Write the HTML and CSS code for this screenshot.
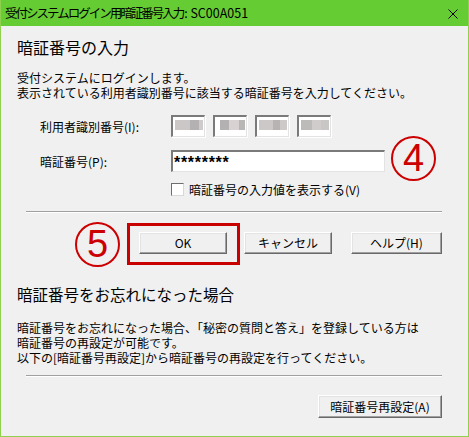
FILE: index.html
```html
<!DOCTYPE html>
<html lang="ja">
<head>
    <meta charset="UTF-8">
    <title>暗証番号入力</title>
    <link rel="stylesheet" href="styles.css">
</head>
<body>
    <div class="window">
        <div class="titlebar">
            <span class="title"><span class="title-jp">受付システムログイン用暗証番号入力</span>: SC00A051</span>
            <svg class="close" width="12" height="12" viewBox="0 0 12 12">
                <path d="M1.5 1.5 L10.5 10.5 M10.5 1.5 L1.5 10.5" stroke="#000" stroke-width="1"/>
            </svg>
        </div>

        <div class="content">
            <h1 class="heading first">暗証番号の入力</h1>
            <p class="text intro">受付システムにログインします。<br>表示されている利用者識別番号に該当する暗証番号を入力してください。</p>

            <div class="row row-id">
                <label class="label">利用者識別番号(I):</label>
                <div class="id-boxes">
                    <div class="id-box"><div class="mask mask-a"></div></div>
                    <div class="id-box"><div class="mask mask-b"></div></div>
                    <div class="id-box"><div class="mask mask-c"></div></div>
                    <div class="id-box"><div class="mask mask-d"></div></div>
                </div>
            </div>

            <div class="row row-pass">
                <label class="label">暗証番号(P):</label>
                <div class="field">********</div>
            </div>

            <div class="row row-check">
                <span class="checkbox"></span>
                <span class="check-label">暗証番号の入力値を表示する(V)</span>
            </div>

            <div class="sep sep-top"></div>

            <div class="buttons">
                <button class="btn btn-ok">OK</button>
                <button class="btn btn-cancel">キャンセル</button>
                <button class="btn btn-help">ヘルプ(H)</button>
            </div>

            <h2 class="heading second">暗証番号をお忘れになった場合</h2>
            <p class="text forgot">暗証番号をお忘れになった場合、「秘密の質問と答え」を登録している方は<br>暗証番号の再設定が可能です。<br>以下の[暗証番号再設定]から暗証番号の再設定を行ってください。</p>

            <div class="sep sep-bottom"></div>

            <div class="buttons reset-row">
                <button class="btn btn-reset">暗証番号再設定(A)</button>
            </div>

            <!-- annotation overlays -->
            <div class="step step-4">4</div>
            <div class="step step-5">5</div>
            <div class="highlight"></div>
        </div>
    </div>
</body>
</html>
```

FILE: styles.css
```css
* {
    box-sizing: border-box;
}

body {
    margin: 0;
    background: #f0f0f0;
    font-family: "Noto Sans CJK JP", "Noto Sans", sans-serif;
    font-size: 12px;
    color: #000;
}

.window {
    width: 469px;
    height: 437px;
    border: 1px solid #8fd14f;
    border-top: none;
    background: #f0f0f0;
    overflow: hidden;
}

.titlebar {
    height: 26px;
    margin: 0 -1px;
    background: #66cc33;
    display: flex;
    align-items: center;
    justify-content: space-between;
    padding: 0 10px 0 5px;
}

.title {
    font-size: 12.5px;
    line-height: 16px;
    margin-top: -1px;
}

.title-jp {
    letter-spacing: -2px;
    margin-right: 1px;
}

.close {
    display: block;
    margin-top: 2px;
}

.content {
    position: relative;
    padding: 0 26px 0 16px;
}

.heading {
    margin: 0;
    font-weight: normal;
    font-size: 16px;
    line-height: 20px;
}

.heading.first {
    padding-top: 11px;
}

.heading.second {
    margin-top: 30px;
    font-size: 15.5px;
}

.text {
    margin: 0;
    line-height: 15px;
}

.intro {
    margin-top: 13px;
}

.forgot {
    margin-top: 16px;
}

.row {
    display: flex;
    align-items: center;
    padding-left: 23px;
}

.label {
    width: 131px;
    line-height: 15px;
}

.row-id {
    margin-top: 15px;
    height: 22px;
}

.row-pass {
    margin-top: 13px;
    height: 22px;
}

.row-check {
    margin-top: 10px;
    height: 15px;
    padding-left: 154px;
}

.id-boxes {
    display: flex;
    gap: 8px;
}

.id-box {
    width: 34px;
    height: 22px;
    background: #fff;
    border-top: 2px solid #7a7a7a;
    border-left: 2px solid #7a7a7a;
    border-right: 1px solid #e3e3e3;
    border-bottom: 1px solid #e3e3e3;
    box-shadow: 1px 1px 0 #fff;
}

.mask {
    height: 10px;
    margin: 3px 1px 0 2px;
}

.mask-a {
    background: linear-gradient(to right, #ccc7c7 0 52%, #b3b1b1 52% 86%, #cfcbcb 86%);
}

.mask-b {
    background: linear-gradient(to right, #fff 0 10%, #b3b1b1 10% 44%, #d8d2d2 44% 78%, #b9b6b6 78%);
}

.mask-c {
    background: linear-gradient(to right, #ccc8c8 0 50%, #b7b3b3 50% 75%, #cdc9c9 75%);
}

.mask-d {
    background: linear-gradient(to right, #bdbaba 0 38%, #d0cccc 38% 72%, #c9c6c6 72%);
}

.field {
    width: 214px;
    height: 22px;
    background: #fff;
    border-top: 2px solid #7a7a7a;
    border-left: 2px solid #7a7a7a;
    border-right: 1px solid #e3e3e3;
    border-bottom: 1px solid #e3e3e3;
    padding-left: 1px;
    font-family: "Liberation Sans", sans-serif;
    font-size: 16px;
    font-weight: bold;
    line-height: 22px;
    letter-spacing: 0.7px;
}

.checkbox {
    width: 13px;
    height: 13px;
    background: #fff;
    border-top: 1px solid #6e6e6e;
    border-left: 1px solid #6e6e6e;
    border-right: 1px solid #d8d8d8;
    border-bottom: 1px solid #d8d8d8;
    margin-right: 5px;
}

.check-label {
    line-height: 15px;
}

.sep {
    margin-left: 9px;
    height: 2px;
    border-top: 1px solid #a0a0a0;
    border-bottom: 1px solid #fff;
}

.sep-top {
    margin-top: 14px;
}

.sep-bottom {
    margin-top: 10px;
}

.buttons {
    display: flex;
    justify-content: flex-end;
    margin-top: 19px;
}

.btn {
    height: 22px;
    padding: 0;
    font-family: "Noto Sans CJK JP", "Noto Sans", sans-serif;
    font-size: 12px;
    line-height: 18px;
    color: #000;
    background: #f0f0f0;
    border-top: 1px solid #fff;
    border-left: 1px solid #fff;
    border-right: 1px solid #696969;
    border-bottom: 1px solid #696969;
    box-shadow: inset -1px -1px 0 #a0a0a0, inset 1px 1px 0 #e3e3e3;
}

.btn-ok {
    width: 88px;
}

.btn-cancel {
    width: 88px;
    margin-left: 17px;
}

.btn-help {
    width: 91px;
    margin-left: 19px;
}

.reset-row {
    margin-top: 18px;
}

.btn-reset {
    width: 124px;
    height: 23px;
}

.step {
    position: absolute;
    width: 45px;
    height: 45px;
    border: 2px solid #cc0000;
    border-radius: 50%;
    color: #cc0000;
    font-family: "Liberation Sans", sans-serif;
    font-size: 38px;
    line-height: 41px;
    text-align: center;
}

.step-4 {
    left: 390px;
    top: 110px;
}

.step-5 {
    left: 74px;
    top: 196px;
}

.highlight {
    position: absolute;
    left: 126px;
    top: 197px;
    width: 113px;
    height: 42px;
    border: 3px solid #c80000;
}
```
